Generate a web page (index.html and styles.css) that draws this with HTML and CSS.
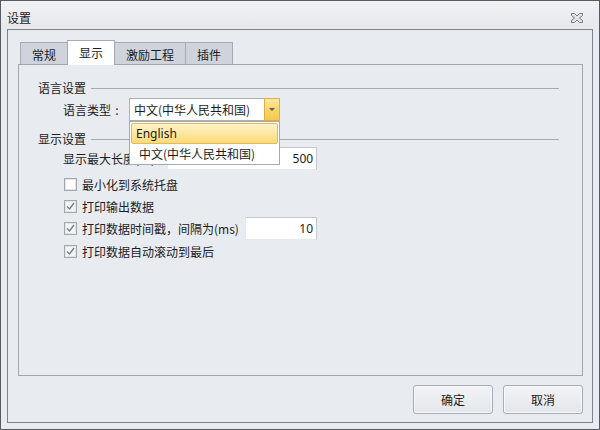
FILE: index.html
```html
<!DOCTYPE html>
<html lang="zh-CN">
<head>
    <meta charset="UTF-8">
    <title>设置</title>
    <link rel="stylesheet" href="styles.css">
</head>
<body>
    <div class="window">
        <div class="titlebar">
            <span class="title">设置</span>
            <svg class="close" width="12" height="10" viewBox="0 0 12 10">
                <polygon points="0.5,0.5 3.5,0.5 6,3 8.5,0.5 11.5,0.5 11.5,2.5 8.5,5 11.5,7.5 11.5,9.5 8.5,9.5 6,7 3.5,9.5 0.5,9.5 0.5,7.5 3.5,5 0.5,2.5" fill="#e2e4e8" stroke="#767a81" stroke-width="1"/>
            </svg>
        </div>
        <div class="frame">
            <div class="tabs">
                <div class="tab">常规</div>
                <div class="tab active">显示</div>
                <div class="tab wide">激励工程</div>
                <div class="tab">插件</div>
            </div>
            <div class="page">
                <div class="groupHead"><span>语言设置</span><i class="rule"></i></div>
                <div class="row comboRow">
                    <span class="label">语言类型<span class="colon">:</span></span>
                    <div class="combo">
                        <span class="comboText">中文(中华人民共和国)</span>
                        <span class="comboBtn"><i class="arrow"></i></span>
                        <ul class="dropList">
                            <li class="hot">English</li>
                            <li>中文(中华人民共和国)</li>
                        </ul>
                    </div>
                </div>
                <div class="groupHead second"><span>显示设置</span><i class="rule"></i></div>
                <div class="row fieldRow">
                    <span class="label">显示最大长度(行)<span class="colon">:</span></span>
                    <div class="num wideNum">500</div>
                </div>
                <div class="row checkRow first">
                    <span class="box"></span>
                    <span class="label">最小化到系统托盘</span>
                </div>
                <div class="row checkRow">
                    <span class="box checked"><svg width="11" height="11" viewBox="0 0 11 11"><path d="M2 5.5 L4.5 8 L9 2" fill="none" stroke="#7a7c80" stroke-width="1.4"/></svg></span>
                    <span class="label">打印输出数据</span>
                </div>
                <div class="row checkRow fieldRow">
                    <span class="box checked"><svg width="11" height="11" viewBox="0 0 11 11"><path d="M2 5.5 L4.5 8 L9 2" fill="none" stroke="#7a7c80" stroke-width="1.4"/></svg></span>
                    <span class="label">打印数据时间戳，间隔为(ms)</span>
                    <div class="num">10</div>
                </div>
                <div class="row checkRow">
                    <span class="box checked"><svg width="11" height="11" viewBox="0 0 11 11"><path d="M2 5.5 L4.5 8 L9 2" fill="none" stroke="#7a7c80" stroke-width="1.4"/></svg></span>
                    <span class="label">打印数据自动滚动到最后</span>
                </div>
            </div>
            <div class="buttons">
                <button class="btn">确定</button>
                <button class="btn">取消</button>
            </div>
        </div>
    </div>
</body>
</html>
```

FILE: styles.css
```css
* {
    box-sizing: border-box;
}
body {
    margin: 0;
    font-family: "Noto Sans CJK SC", "Noto Sans", sans-serif;
    font-size: 12px;
    color: #1c1c1c;
}
.window {
    width: 600px;
    height: 430px;
    border: 1px solid #565a61;
    background-color: #e8ebf0;
    display: flex;
    flex-direction: column;
}
.titlebar {
    height: 28px;
    flex: none;
    display: flex;
    align-items: center;
    justify-content: space-between;
    padding: 6px 16px 0 6px;
    background: linear-gradient(#f1f2f4, #e6e8ec);
}
.title {
    line-height: 16px;
}
.close {
    display: block;
    margin-top: -1px;
}
.frame {
    flex: 1;
    margin: 0 6px 6px 6px;
    border: 1px solid #7e838c;
    padding: 10px 9px 8px 10px;
    display: flex;
    flex-direction: column;
}
.tabs {
    display: flex;
    align-items: flex-end;
    height: 24px;
    padding-left: 2px;
    position: relative;
    z-index: 1;
}
.tab {
    width: 48px;
    height: 22px;
    margin-left: -1px;
    border: 1px solid #a4a9b2;
    border-bottom: none;
    background-color: #cfd4dc;
    text-align: center;
    line-height: 24px;
}
.tab:first-child {
    margin-left: 0;
}
.tab.wide {
    width: 72px;
}
.tab.active {
    height: 25px;
    margin-bottom: -1px;
    background-color: #fff;
    position: relative;
    z-index: 2;
}
.page {
    flex: 1;
    border: 1px solid #a2a7b0;
    padding: 15px 0 0 19px;
}
.groupHead {
    display: flex;
    align-items: center;
    height: 16px;
    line-height: 16px;
    margin-right: 23px;
}
.groupHead.second {
    margin-top: 10px;
}
.rule {
    flex: 1;
    height: 1px;
    margin-left: 5px;
    background-color: #a6abb3;
}
.row {
    display: flex;
    align-items: center;
    margin-left: 25px;
}
.label {
    white-space: nowrap;
}
.colon {
    display: inline-block;
    width: 12px;
    text-align: center;
}
.comboRow {
    margin-top: 2px;
}
.combo {
    position: relative;
    width: 151px;
    height: 23px;
    margin-left: 6px;
    border: 1px solid #aab0b8;
    background-color: #fff;
}
.comboText {
    display: block;
    padding-left: 4px;
    line-height: 21px;
}
.comboBtn {
    position: absolute;
    top: -1px;
    right: -1px;
    width: 16px;
    height: 23px;
    border: 1px solid #e0ad45;
    background: linear-gradient(#fde9a4, #f9d668 50%, #f5c84c);
    display: flex;
    align-items: center;
    justify-content: center;
}
.arrow {
    width: 0;
    height: 0;
    border-left: 3px solid transparent;
    border-right: 3px solid transparent;
    border-top: 3px solid #5e5a50;
}
.dropList {
    position: absolute;
    top: 22px;
    left: -1px;
    width: 151px;
    height: 44px;
    margin: 0;
    padding: 1px;
    list-style: none;
    border: 1px solid #a5a9b0;
    background-color: #fff;
    z-index: 5;
}
.dropList li {
    height: 20px;
    line-height: 20px;
    padding-left: 8px;
}
.dropList li.hot {
    height: 21px;
    line-height: 19px;
    padding-left: 4px;
    border: 1px solid #e2bb58;
    border-radius: 2px;
    background: linear-gradient(#fef2c8, #fbda78);
    font-family: "Noto Sans", sans-serif;
}
.fieldRow {
    width: 254px;
}
.num {
    flex: none;
    height: 23px;
    width: 72px;
    margin-left: auto;
    border: 1px solid #c3c7ce;
    border-left-color: #e6e8ec;
    border-bottom-color: #e6e8ec;
    background-color: #fff;
    text-align: right;
    padding-right: 3px;
    line-height: 21px;
    font-family: "Noto Sans", sans-serif;
}
.num.wideNum {
    width: 150px;
}
.checkRow {
    height: 22px;
}
.checkRow.fieldRow {
    height: 23px;
}
.checkRow.first {
    margin-top: 3px;
}
.box {
    flex: none;
    width: 13px;
    height: 13px;
    margin: 0 5px 0 1px;
    border: 1px solid #a3a7ae;
    background-color: #fff;
    box-shadow: inset 0 0 0 1px #e2e4e8;
    display: flex;
}
.box.checked {
    background-color: #f3f4f6;
}
.buttons {
    display: flex;
    justify-content: flex-end;
    gap: 10px;
    margin-top: 9px;
    height: 29px;
}
.btn {
    width: 80px;
    height: 29px;
    border: 1px solid #a8acb4;
    border-radius: 3px;
    background: linear-gradient(#f3f4f6, #e3e6ea);
    box-shadow: inset 0 0 0 1px #f8f9fa;
    font-family: inherit;
    font-size: 12px;
    color: #1c1c1c;
    padding: 0;
}
```
